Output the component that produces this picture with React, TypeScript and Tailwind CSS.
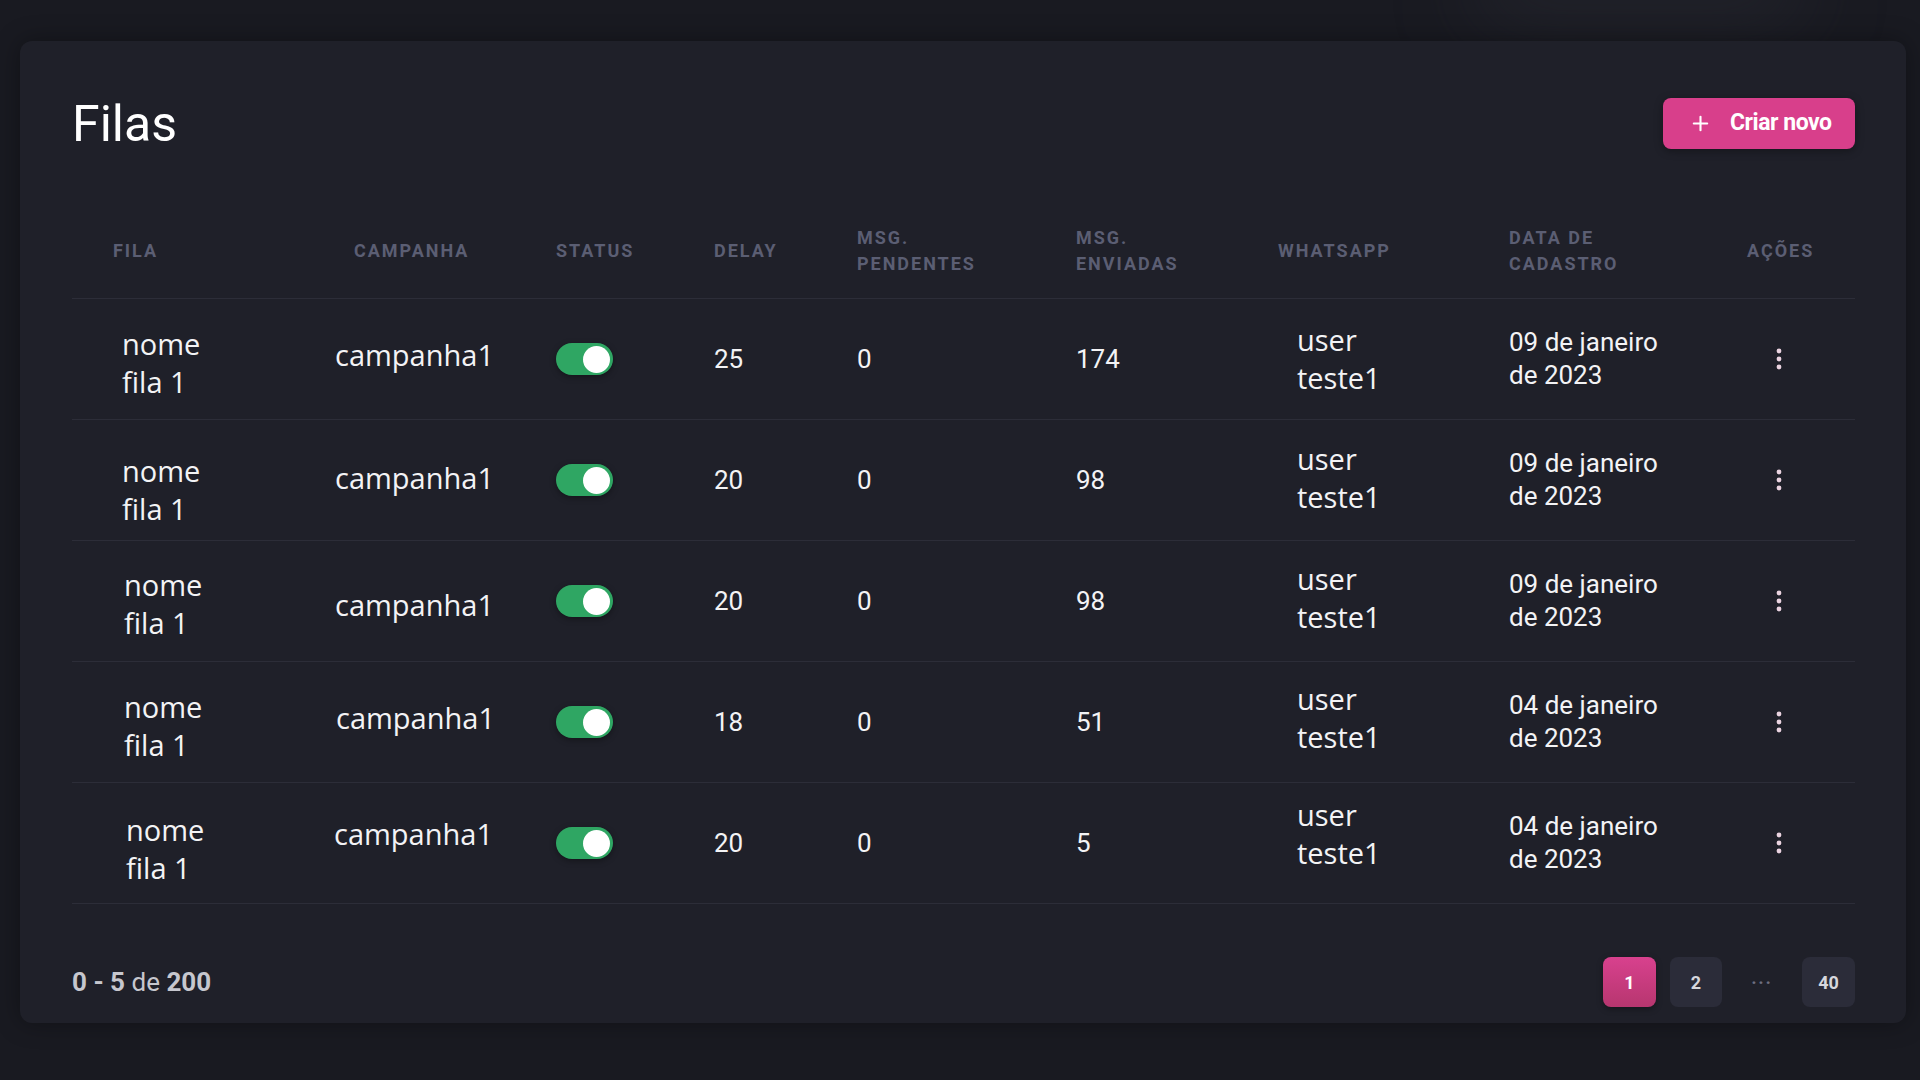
import { Plus } from 'lucide-react';

type Row = {
  delay: number;
  pending: number;
  sent: number;
  day: string;
  nameCls: string;
  campCls: string;
  userCls: string;
};

const rows: Row[] = [
  { delay: 25, pending: 0, sent: 174, day: '09', nameCls: 'pl-[50px] translate-y-[4px]', campCls: 'pl-[5px] -translate-y-[4px]', userCls: '' },
  { delay: 20, pending: 0, sent: 98, day: '09', nameCls: 'pl-[50px] translate-y-[10px]', campCls: 'pl-[5px] -translate-y-[2px]', userCls: '-translate-y-[2px]' },
  { delay: 20, pending: 0, sent: 98, day: '09', nameCls: 'pl-[52px] translate-y-[3px]', campCls: 'pl-[5px] translate-y-[4px]', userCls: '-translate-y-[3px]' },
  { delay: 18, pending: 0, sent: 51, day: '04', nameCls: 'pl-[52px] translate-y-[4px]', campCls: 'pl-[6px] -translate-y-[4px]', userCls: '-translate-y-[4px]' },
  { delay: 20, pending: 0, sent: 5, day: '04', nameCls: 'pl-[54px] translate-y-[6px]', campCls: 'pl-[4px] -translate-y-[9px]', userCls: '-translate-y-[9px]' },
];

const cols = 'grid grid-cols-[258px_210px_160px_145px_215px_200px_230px_210px_1fr]';

const Toggle = () => (
  <div className="w-[57px] h-[32px] rounded-full bg-[#2fa663] flex items-center justify-end pr-[3px] shadow-[0_2px_6px_rgba(0,0,0,0.35)]">
    <div className="w-[27px] h-[27px] rounded-full bg-white" />
  </div>
);

const Dots = () => (
  <svg width="6" height="22" viewBox="0 0 6 22">
    <circle cx="3" cy="3" r="2.4" fill="#ead3e0" />
    <circle cx="3" cy="11" r="2.4" fill="#ead3e0" />
    <circle cx="3" cy="19" r="2.4" fill="#ead3e0" />
  </svg>
);

export default function App() {
  return (
    <div className="relative w-[1920px] h-[1080px] overflow-hidden bg-[#191a21] font-['Roboto',sans-serif]">
      {/* faint glow at the top */}
      <div className="absolute top-[-40px] left-[1470px] w-[340px] h-[60px] rounded-full bg-[#2a2b34] blur-2xl opacity-60 pointer-events-none" />

      <div className="relative ml-[20px] mt-[41px] w-[1886px] h-[982px] rounded-xl bg-[#1f2029] shadow-[0_0_24px_rgba(0,0,0,0.35)] pl-[52px] pr-[51px] pt-[57px]">
        {/* title row */}
        <div className="flex items-center justify-between h-[51px]">
          <h1 className="text-[50px] leading-none text-white font-normal">Filas</h1>
          <button className="h-[51px] w-[192px] rounded-lg bg-[#d83f8b] flex items-center pl-[26px] gap-[18px] text-white shadow-[0_2px_8px_rgba(0,0,0,0.35)]">
            <Plus className="w-[23px] h-[23px]" strokeWidth={2.2} />
            <span className="text-[23px] font-bold tracking-[-0.02em]">Criar novo</span>
          </button>
        </div>

        {/* table header */}
        <div className={`${cols} mt-[55px] h-[95px] items-center border-b border-[#2c2d38] text-[18px] leading-[26px] font-bold tracking-[0.11em] uppercase text-[#5b5e73]`}>
          <div className="pl-[41px]">Fila</div>
          <div className="pl-[24px]">Campanha</div>
          <div className="pl-[16px]">Status</div>
          <div className="pl-[14px]">Delay</div>
          <div className="pl-[12px]">Msg.<br />Pendentes</div>
          <div className="pl-[16px]">Msg.<br />Enviadas</div>
          <div className="pl-[18px]">Whatsapp</div>
          <div className="pl-[19px]">Data de<br />Cadastro</div>
          <div className="pl-[47px]">Ações</div>
        </div>

        {/* table body */}
        {rows.map((r, i) => (
          <div key={i} className={`${cols} h-[121px] items-center border-b border-[#2c2d38] text-[#f3f3f5]`}>
            <div className={`font-['Open_Sans',sans-serif] text-[29px] leading-[38px] ${r.nameCls}`}>
              nome<br />fila 1
            </div>
            <div className={`font-['Open_Sans',sans-serif] text-[29px] leading-[38px] ${r.campCls}`}>campanha1</div>
            <div className="pl-[16px]">
              <Toggle />
            </div>
            <div className="pl-[14px] text-[26px]">{r.delay}</div>
            <div className="pl-[12px] text-[26px]">{r.pending}</div>
            <div className="pl-[16px] text-[26px]">{r.sent}</div>
            <div className={`pl-[37px] font-['Open_Sans',sans-serif] text-[29px] leading-[38px] ${r.userCls}`}>
              user<br />teste1
            </div>
            <div className="pl-[19px] text-[26px] leading-[33px]">
              {r.day} de janeiro<br />de 2023
            </div>
            <div className="flex justify-center pl-[2px]">
              <Dots />
            </div>
          </div>
        ))}

        {/* footer / pagination */}
        <div className="flex items-center justify-between mt-[53px]">
          <div className="text-[26px] text-[#c6c7ce]">
            <span className="font-bold">0 - 5</span> de <span className="font-bold">200</span>
          </div>
          <div className="flex items-center gap-[14px] text-[18px] font-bold">
            <div className="w-[53px] h-[50px] rounded-lg bg-gradient-to-b from-[#d8418e] to-[#b7366f] text-white flex items-center justify-center shadow-[0_2px_6px_rgba(0,0,0,0.35)]">1</div>
            <div className="w-[52px] h-[50px] rounded-lg bg-[#2b2c39] text-[#d6d7dd] flex items-center justify-center">2</div>
            <div className="w-[52px] h-[50px] text-[#6d6f80] flex items-center justify-center tracking-[0.1em]">···</div>
            <div className="w-[53px] h-[50px] rounded-lg bg-[#2b2c39] text-[#d6d7dd] flex items-center justify-center">40</div>
          </div>
        </div>
      </div>
    </div>
  );
}
